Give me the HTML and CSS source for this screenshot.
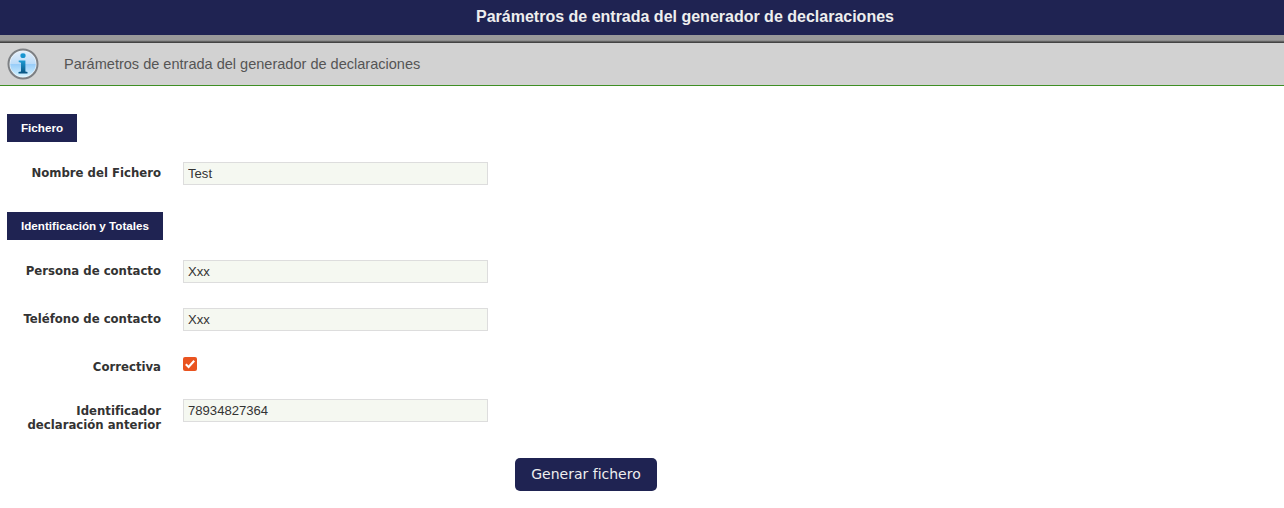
FILE: index.html
```html
<!DOCTYPE html>
<html lang="es">
<head>
<meta charset="utf-8">
<title>Generador de declaraciones</title>
<link rel="stylesheet" href="styles.css">
</head>
<body>
<header class="title-bar"><h1>Parámetros de entrada del generador de declaraciones</h1></header>
<div class="info-bar">
  <svg class="info-icon" width="32" height="32" viewBox="0 0 32 32" aria-hidden="true">
    <defs>
      <linearGradient id="glass" x1="0" y1="0" x2="0" y2="1">
        <stop offset="0" stop-color="#e3effb"/><stop offset=".49" stop-color="#bcdcf8"/>
        <stop offset=".52" stop-color="#98cdf9"/><stop offset="1" stop-color="#d5f3ff"/>
      </linearGradient>
      <linearGradient id="letter" x1="0" y1="0" x2="0" y2="1">
        <stop offset="0" stop-color="#1b9bd4"/><stop offset="1" stop-color="#085482"/>
      </linearGradient>
    </defs>
    <circle cx="16" cy="16" r="14.5" fill="#eef5fb" stroke="#7d8084" stroke-width="2"/>
    <circle cx="16" cy="16" r="12.8" fill="url(#glass)"/>
    <ellipse cx="16" cy="7.7" rx="2.6" ry="2.4" fill="#1795d0"/>
    <path d="M11.7 12.6h6.7v10.8l2.1.6v1.4h-9V24l2.5-.6v-8.6l-2.3-.7z" fill="url(#letter)"/>
  </svg>
  <p class="info-text">Parámetros de entrada del generador de declaraciones</p>
</div>
<form class="form">
  <h2 class="section">Fichero</h2>
  <div class="row"><label class="label" for="name">Nombre del Fichero</label><input class="field" id="name" type="text" value="Test"></div>
  <h2 class="section section-next">Identificación y Totales</h2>
  <div class="row"><label class="label" for="person">Persona de contacto</label><input class="field" id="person" type="text" value="Xxx"></div>
  <div class="row"><label class="label" for="phone">Teléfono de contacto</label><input class="field" id="phone" type="text" value="Xxx"></div>
  <div class="row row-check"><label class="label" for="fix">Correctiva</label>
    <span class="check" id="fix" role="checkbox" aria-checked="true"><svg width="14" height="14" viewBox="0 0 14 14"><path d="M2.8 7.3l2.8 2.7 5.6-6.2" fill="none" stroke="#fff" stroke-width="2.1"/></svg></span></div>
  <div class="row row-long"><label class="label" for="prev">Identificador declaración anterior</label><input class="field" id="prev" type="text" value="78934827364"></div>
  <button class="submit" type="button">Generar fichero</button>
</form>
</body>
</html>
```
FILE: styles.css
```css
* { box-sizing: border-box; }
body { margin: 0; background: #fff; color: #333; font-family: "Liberation Sans", Arial, sans-serif; }
.title-bar { height: 35px; padding-left: 86px; background: #1f2352; text-align: center; }
.title-bar h1 { margin: 0; color: #eee; font-size: 16px; line-height: 33px; }
.info-bar { display: flex; align-items: center; height: 51px; padding: 7px 7px 0; border-bottom: 1px solid #3f8f24;
  background: linear-gradient(#999 0, #999 5px, #808080 6px, #444 7px, #444 8px, #d2d2d2 8px); }
.info-icon { flex: none; }
.info-text { margin: 0 0 0 25px; color: #555; font-size: 14.54px; line-height: 18px; }
.form { display: flex; flex-direction: column; align-items: flex-start; padding: 28px 7px 0; }
.section { height: 28px; margin: 0 0 20px; padding: 0 14px; background: #1f2352; color: #fff; font-size: 11.67px; line-height: 28px; }
.section-next { margin-top: 2px; }
.row { display: flex; height: 48px; }
.label { width: 154px; margin-right: 22px; padding-top: 4px; font: bold 13px/14px "DejaVu Sans Condensed", "DejaVu Sans", sans-serif; font-stretch: condensed; text-align: right; }
.field { width: 305px; height: 23px; padding: 0 4px; border: 1px solid #ddd; background: #f5f8f1; color: #333; font: 13.1px "Liberation Sans", Arial, sans-serif; }
.row-check { height: 43px; }
.check { width: 14px; height: 14px; margin-top: .5px; border-radius: 2px; background: #e95420; }
.check svg { display: block; }
.row-long { height: 59px; }
.row-long .label { padding-top: 5px; }
.submit { width: 142px; height: 33px; margin-left: 508px; padding: 0 0 2px; border: 0; border-radius: 5px; background: #1f2352; color: #eee; font: 14px "DejaVu Sans", sans-serif; }
```
